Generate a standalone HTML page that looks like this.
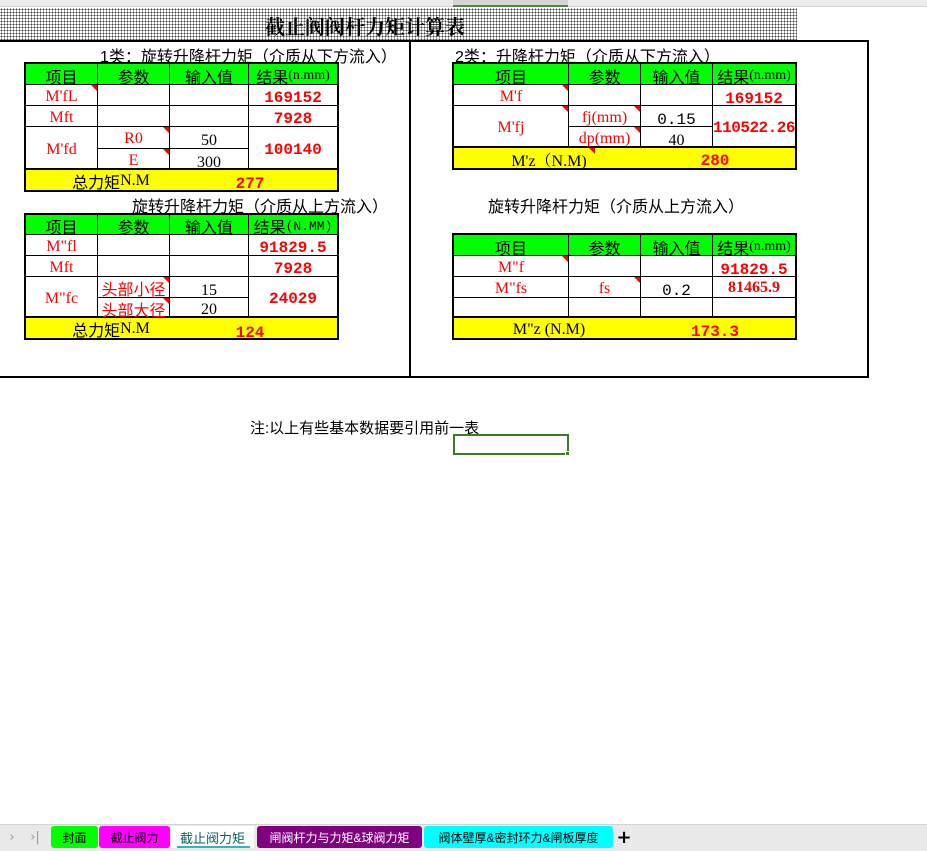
<!DOCTYPE html>
<html><head><meta charset="utf-8"><style>
*{margin:0;padding:0;box-sizing:border-box}
body{width:927px;height:851px;position:relative;background:#fff;font-family:"Liberation Serif","Noto Serif CJK SC",serif;overflow:hidden;font-size:16px}
.a{position:absolute}
.c{position:absolute;display:flex;align-items:center;justify-content:center;white-space:nowrap;padding-top:3px}
.hd{background:#00ff00;color:#000;font-family:"Liberation Sans","Noto Sans CJK SC",sans-serif;font-size:16px}
.r{color:#f00}
.b{color:#f00;font-weight:bold;font-family:"Liberation Mono","Noto Sans CJK SC",monospace;font-size:16px}
.y{background:#ff0}
.hl{position:absolute;height:1px;background:#000}
.vl{position:absolute;width:1px;background:#000}
.tri{position:absolute;width:0;height:0;border-top:6px solid #f00;border-left:6px solid transparent}
.cjk{font-family:"Liberation Sans","Noto Sans CJK SC",sans-serif}
</style></head><body>
<div class="a" style="left:0;top:0;width:927px;height:7px;background:#ececec;border-bottom:1px solid #d0d0d0"></div>
<div class="a" style="left:453px;top:0;width:115px;height:7px;background:#d6d6d6;border-bottom:2px solid #4a8a3a"></div>
<div class="a" style="left:0;top:8px;width:797px;height:32px;background-color:#fff;background-image:radial-gradient(#444 0.9px,transparent 1px);background-size:3px 3px"></div>
<div class="c" style="left:250px;top:9px;width:230px;height:30px;font-size:20px;font-weight:bold;font-family:'Noto Serif CJK SC',serif">截止阀阀杆力矩计算表</div>
<div class="a" style="left:-2px;top:40px;width:871px;height:338px;border:2px solid #000"></div>
<div class="vl" style="left:409px;top:40px;height:338px;width:2px"></div>

<div class="a cjk" style="left:100px;top:43px;font-size:16px">1类：旋转升降杆力矩（介质从下方流入）</div>
<div class="a cjk" style="left:455px;top:43px;font-size:16px">2类：升降杆力矩（介质从下方流入）</div>
<div class="a cjk" style="left:132px;top:193px;font-size:16px">旋转升降杆力矩（介质从上方流入）</div>
<div class="a cjk" style="left:488px;top:193px;font-size:16px">旋转升降杆力矩（介质从上方流入）</div>

<!-- Table L1 -->
<div class="a" style="left:24px;top:62px;width:315px;height:130px;border:2px solid #000"></div>
<div class="c hd" style="left:26px;top:64px;width:71px;height:20px">项目</div>
<div class="c hd" style="left:98px;top:64px;width:71px;height:20px">参数</div>
<div class="c hd" style="left:170px;top:64px;width:78px;height:20px">输入值</div>
<div class="c hd" style="left:249px;top:64px;width:88px;height:20px">结果<span style="font-family:'Liberation Serif';font-size:14px">(n.mm)</span></div>
<div class="hl" style="left:25px;top:84px;width:313px"></div>
<div class="hl" style="left:25px;top:105px;width:313px"></div>
<div class="hl" style="left:25px;top:126px;width:313px"></div>
<div class="hl" style="left:97px;top:148px;width:151px"></div>
<div class="a" style="left:25px;top:168px;width:313px;height:2px;background:#000"></div>
<div class="vl" style="left:97px;top:63px;height:106px"></div>
<div class="vl" style="left:169px;top:63px;height:106px"></div>
<div class="vl" style="left:248px;top:63px;height:106px"></div>
<div class="c r" style="left:26px;top:85px;width:71px;height:20px">M'fL</div><div class="tri" style="left:91px;top:85px"></div>
<div class="c b" style="left:249px;top:86px;width:88px;height:20px">169152</div>
<div class="c r" style="left:26px;top:106px;width:71px;height:20px">Mft</div>
<div class="c b" style="left:249px;top:107px;width:88px;height:20px">7928</div>
<div class="c r" style="left:26px;top:127px;width:71px;height:42px">M'fd</div>
<div class="c r" style="left:98px;top:127px;width:71px;height:21px">R0</div><div class="tri" style="left:163px;top:127px"></div>
<div class="c r" style="left:98px;top:149px;width:71px;height:20px">E</div><div class="tri" style="left:163px;top:149px"></div>
<div class="c" style="left:170px;top:129px;width:78px;height:21px">50</div>
<div class="c" style="left:170px;top:151px;width:78px;height:20px">300</div>
<div class="c b" style="left:249px;top:127px;width:88px;height:42px">100140</div>
<div class="a y" style="left:26px;top:170px;width:311px;height:20px"></div>
<div class="c" style="left:26px;top:169px;width:170px;height:20px"><span class="cjk">总力矩</span>N.M</div>
<div class="c b" style="left:200px;top:172px;width:100px;height:20px">277</div>

<!-- Table L2 -->
<div class="a" style="left:24px;top:213px;width:315px;height:127px;border:2px solid #000"></div>
<div class="c hd" style="left:26px;top:215px;width:71px;height:19px">项目</div>
<div class="c hd" style="left:98px;top:215px;width:71px;height:19px">参数</div>
<div class="c hd" style="left:170px;top:215px;width:78px;height:19px">输入值</div>
<div class="c hd" style="left:249px;top:215px;width:88px;height:19px">结果<span style="font-family:'Liberation Mono';font-size:13px">(N.MM)</span></div>
<div class="hl" style="left:25px;top:234px;width:313px"></div>
<div class="hl" style="left:25px;top:255px;width:313px"></div>
<div class="hl" style="left:25px;top:276px;width:313px"></div>
<div class="hl" style="left:97px;top:297px;width:151px"></div>
<div class="a" style="left:25px;top:316px;width:313px;height:2px;background:#000"></div>
<div class="vl" style="left:97px;top:214px;height:103px"></div>
<div class="vl" style="left:169px;top:214px;height:103px"></div>
<div class="vl" style="left:248px;top:214px;height:103px"></div>
<div class="c r" style="left:26px;top:235px;width:71px;height:20px">M"fl</div>
<div class="c b" style="left:249px;top:236px;width:88px;height:20px">91829.5</div>
<div class="c r" style="left:26px;top:256px;width:71px;height:20px">Mft</div>
<div class="c b" style="left:249px;top:257px;width:88px;height:20px">7928</div>
<div class="c r" style="left:26px;top:277px;width:71px;height:40px">M"fc</div>
<div class="c r cjk" style="left:98px;top:276px;width:71px;height:20px;font-size:16px">头部小径</div><div class="tri" style="left:163px;top:277px"></div>
<div class="c r cjk" style="left:98px;top:297px;width:71px;height:20px;font-size:16px;overflow:hidden">头部大径</div><div class="tri" style="left:163px;top:298px"></div>
<div class="c" style="left:170px;top:279px;width:78px;height:20px">15</div>
<div class="c" style="left:170px;top:299px;width:78px;height:19px">20</div>
<div class="c b" style="left:249px;top:277px;width:88px;height:40px">24029</div>
<div class="a y" style="left:26px;top:318px;width:311px;height:20px"></div>
<div class="c" style="left:26px;top:317px;width:170px;height:20px"><span class="cjk">总力矩</span>N.M</div>
<div class="c b" style="left:200px;top:321px;width:100px;height:20px">124</div>

<!-- Table R1 -->
<div class="a" style="left:452px;top:62px;width:345px;height:108px;border:2px solid #000"></div>
<div class="c hd" style="left:454px;top:64px;width:114px;height:20px">项目</div>
<div class="c hd" style="left:569px;top:64px;width:71px;height:20px">参数</div>
<div class="c hd" style="left:641px;top:64px;width:71px;height:20px">输入值</div>
<div class="c hd" style="left:713px;top:64px;width:82px;height:20px">结果<span style="font-family:'Liberation Serif';font-size:14px">(n.mm)</span></div>
<div class="hl" style="left:453px;top:84px;width:343px"></div>
<div class="hl" style="left:453px;top:105px;width:343px"></div>
<div class="hl" style="left:568px;top:126px;width:144px"></div>
<div class="a" style="left:453px;top:146px;width:343px;height:2px;background:#000"></div>
<div class="vl" style="left:568px;top:63px;height:84px"></div>
<div class="vl" style="left:640px;top:63px;height:84px"></div>
<div class="vl" style="left:712px;top:63px;height:84px"></div>
<div class="c r" style="left:454px;top:85px;width:114px;height:20px">M'f</div><div class="tri" style="left:562px;top:85px"></div>
<div class="c b" style="left:713px;top:87px;width:82px;height:20px">169152</div>
<div class="c r" style="left:454px;top:106px;width:114px;height:41px">M'fj</div><div class="tri" style="left:562px;top:106px"></div>
<div class="c r" style="left:569px;top:106px;width:71px;height:20px">fj(mm)</div><div class="tri" style="left:634px;top:106px"></div>
<div class="c r" style="left:569px;top:127px;width:71px;height:20px">dp(mm)</div><div class="tri" style="left:634px;top:127px"></div>
<div class="c" style="left:641px;top:108px;width:71px;height:20px;font-family:'Liberation Mono'">0.15</div>
<div class="c" style="left:641px;top:129px;width:71px;height:20px">40</div>
<div class="c b" style="left:713px;top:106px;width:82px;height:41px;letter-spacing:-0.5px">110522.26</div>
<div class="a y" style="left:454px;top:148px;width:341px;height:20px"></div>
<div class="c" style="left:454px;top:148px;width:190px;height:20px">M'z（N.M)</div><div class="tri" style="left:589px;top:148px"></div>
<div class="c b" style="left:665px;top:149px;width:100px;height:20px">280</div>

<!-- Table R2 -->
<div class="a" style="left:452px;top:233px;width:345px;height:107px;border:2px solid #000"></div>
<div class="c hd" style="left:454px;top:235px;width:114px;height:20px">项目</div>
<div class="c hd" style="left:569px;top:235px;width:71px;height:20px">参数</div>
<div class="c hd" style="left:641px;top:235px;width:71px;height:20px">输入值</div>
<div class="c hd" style="left:713px;top:235px;width:82px;height:20px">结果<span style="font-family:'Liberation Serif';font-size:14px">(n.mm)</span></div>
<div class="hl" style="left:453px;top:255px;width:343px"></div>
<div class="hl" style="left:453px;top:276px;width:343px"></div>
<div class="hl" style="left:453px;top:297px;width:343px"></div>
<div class="a" style="left:453px;top:316px;width:343px;height:2px;background:#000"></div>
<div class="vl" style="left:568px;top:234px;height:83px"></div>
<div class="vl" style="left:640px;top:234px;height:83px"></div>
<div class="vl" style="left:712px;top:234px;height:83px"></div>
<div class="c r" style="left:454px;top:256px;width:114px;height:20px">M"f</div><div class="tri" style="left:562px;top:256px"></div>
<div class="c b" style="left:713px;top:258px;width:82px;height:20px">91829.5</div>
<div class="c r" style="left:454px;top:277px;width:114px;height:20px">M"fs</div>
<div class="c r" style="left:569px;top:277px;width:71px;height:20px">fs</div><div class="tri" style="left:634px;top:277px"></div>
<div class="c" style="left:641px;top:279px;width:71px;height:20px;font-family:'Liberation Mono'">0.2</div>
<div class="c" style="left:713px;top:276px;width:82px;height:20px;color:#f00;font-weight:bold">81465.9</div>
<div class="a y" style="left:454px;top:318px;width:341px;height:20px"></div>
<div class="c" style="left:454px;top:318px;width:190px;height:20px">M"z (N.M)</div>
<div class="c b" style="left:665px;top:320px;width:100px;height:20px">173.3</div>

<div class="a cjk" style="left:250px;top:417px;font-size:15px">注:以上有些基本数据要引用前一表</div>
<div class="a" style="left:453px;top:434px;width:116px;height:21px;border:2px solid #3a7d22"></div>
<div class="a" style="left:565px;top:451px;width:5px;height:5px;background:#3a7d22;border:1px solid #fff"></div>

<div class="a" style="left:0;top:824px;width:927px;height:27px;background:#e9e9e9;border-top:1px solid #d4d4d4"></div>
<div class="c" style="left:6px;top:826px;width:12px;height:20px;color:#999;font-family:'DejaVu Sans';font-size:13px">›</div>
<div class="c" style="left:28px;top:826px;width:14px;height:20px;color:#999;font-family:'DejaVu Sans';font-size:13px">›|</div>
<div class="c cjk" style="left:51px;top:826px;width:47px;height:22px;background:#00ff00;border-radius:3px;font-size:12px;padding-top:0">封面</div>
<div class="c cjk" style="left:99px;top:826px;width:71px;height:22px;background:#ff00ff;border-radius:3px;font-size:12px;padding-top:0">截止阀力</div>
<div class="c cjk" style="left:171px;top:826px;width:83px;height:22px;background:#fff;color:#0e5f66;font-size:13px;padding-top:0">截止阀力矩</div>
<div class="a" style="left:177px;top:846px;width:73px;height:2px;background:#2bb8c0"></div>
<div class="c cjk" style="left:257px;top:826px;width:165px;height:22px;background:#800080;color:#fff;border-radius:3px;font-size:12px;padding-top:0">闸阀杆力与力矩&amp;球阀力矩</div>
<div class="c cjk" style="left:424px;top:826px;width:189px;height:22px;background:#00ffff;border-radius:3px;font-size:12px;padding-top:0">阀体壁厚&amp;密封环力&amp;闸板厚度</div>
<div class="c" style="left:616px;top:826px;width:16px;height:22px;font-size:18px;font-weight:bold;font-family:'DejaVu Sans';padding-top:0">+</div>
</body></html>
